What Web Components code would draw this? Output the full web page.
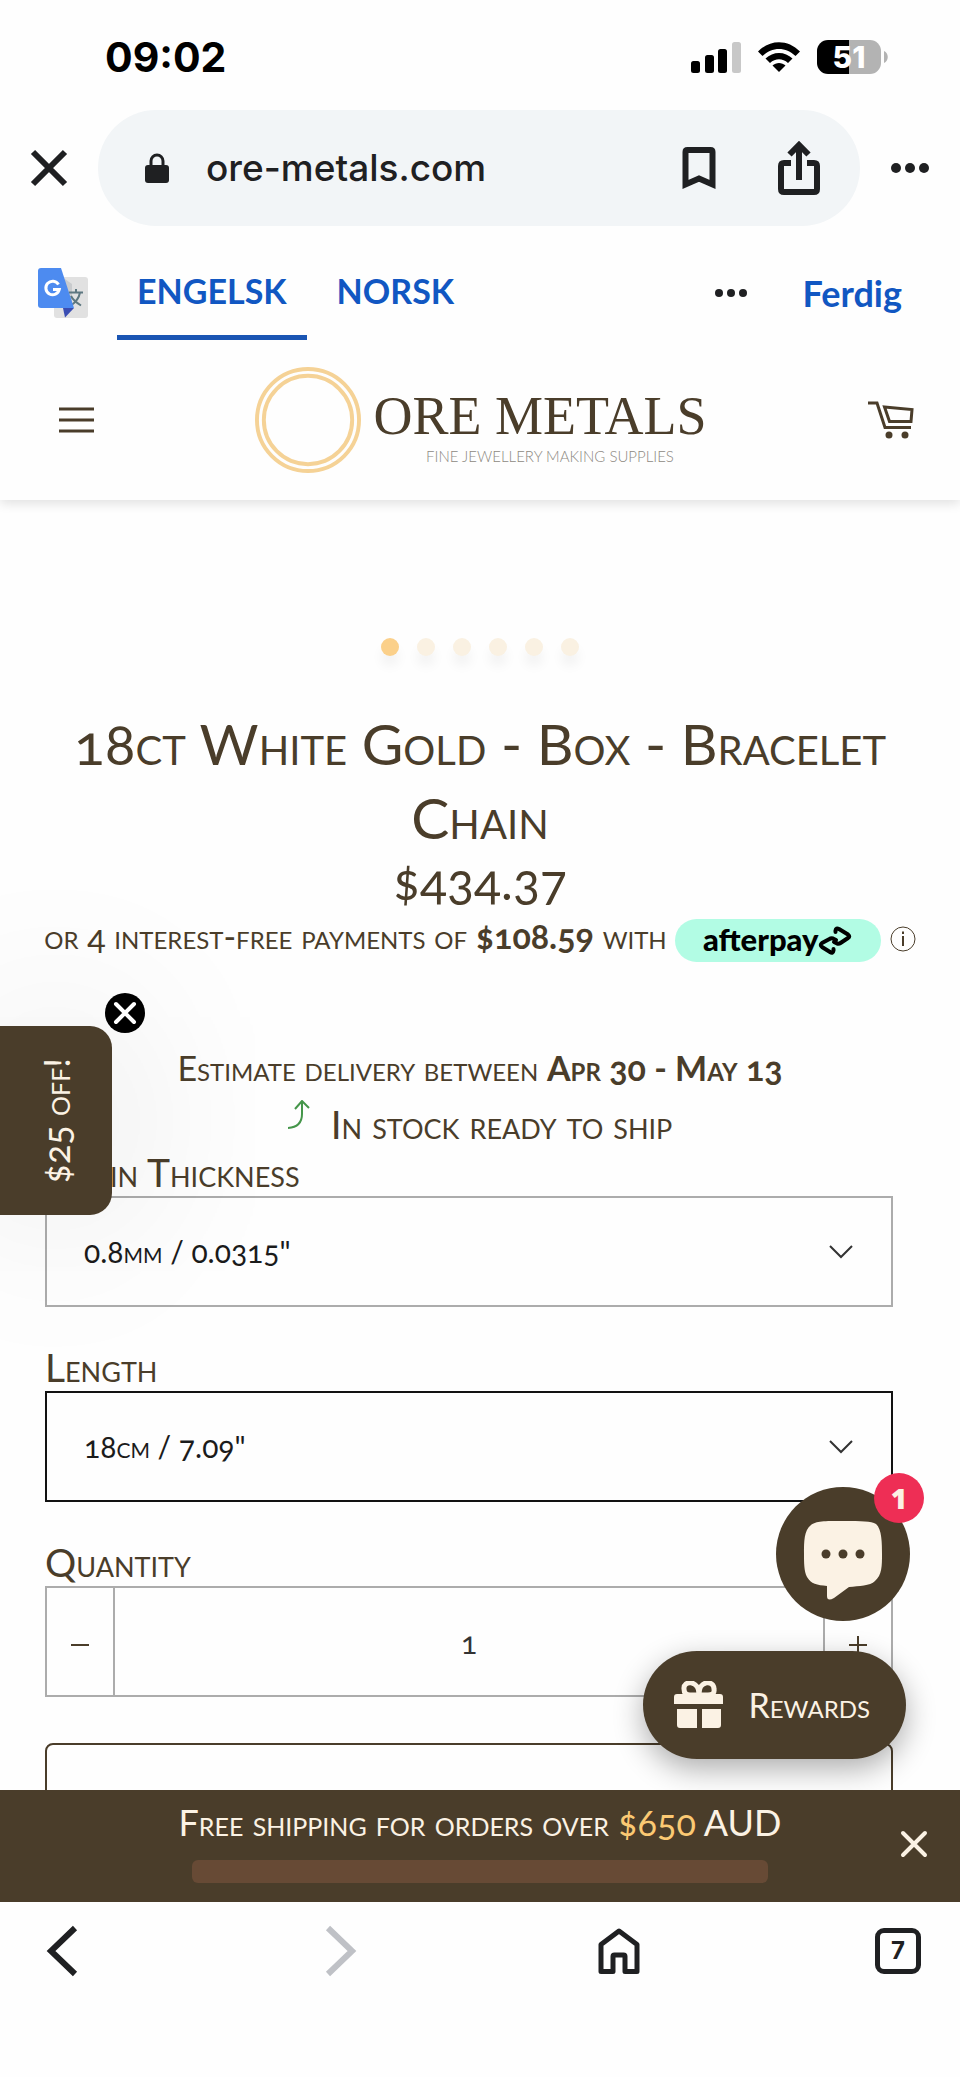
<!DOCTYPE html>
<html lang="en">
<head>
<meta charset="utf-8">
<meta name="viewport" content="width=device-width, initial-scale=1">
<title>18ct White Gold - Box - Bracelet Chain</title>
<style>
  body {
    margin: 0;
    background: #fefefe;
  }
</style>
</head>
<body>
<shop-app></shop-app>

<script>
const base = `
  *, *::before, *::after { box-sizing: border-box; }
  :host { display: block; }
  svg { display: block; flex: none; }
  button {
    margin: 0;
    padding: 0;
    border: 0;
    background: none;
    color: inherit;
    font: inherit;
    cursor: pointer;
  }
`;

function createTemplate(css, html) {
  const template = document.createElement('template');
  template.innerHTML = `<style>${base}${css}</style>${html}`;
  return template;
}

class ShopElement extends HTMLElement {
  constructor() {
    super();
    this._shadowRoot = this.attachShadow({ mode: 'open' });
    this._shadowRoot.appendChild(this.constructor.template.content.cloneNode(true));
  }
}

class PhoneStatus extends ShopElement {
  static template = createTemplate(`
    :host {
      display: flex;
      align-items: center;
      justify-content: space-between;
      height: 110px;
      padding: 4px 72px 0 105px;
      color: #000;
      font: 700 41px/48px Inter, sans-serif;
    }
    .icons { display: flex; align-items: center; gap: 16px; }
    .battery { display: flex; align-items: center; gap: 3px; }
    .level {
      width: 64px;
      height: 34px;
      border-radius: 11px;
      background: linear-gradient(90deg, #000 50%, #b3b3b3 50%);
      color: #fff;
      font: 800 30px/34px Inter, sans-serif;
      text-align: center;
    }
  `, `
    <time>09:02</time>
    <div class="icons">
      <svg width="50" height="32" viewBox="0 0 50 32" aria-hidden="true">
        <rect x="0" y="20" width="9" height="12" rx="2.500"/>
        <rect x="14" y="14" width="9" height="18" rx="2.500"/>
        <rect x="27" y="8" width="9" height="24" rx="2.500"/>
        <rect x="41" y="1" width="9" height="31" rx="2.500" fill="#c8c8c8"/>
      </svg>
      <svg width="44" height="32" viewBox="0 0 44 32" aria-hidden="true">
        <path d="M1 10.500C13-2 31-2 43 10.500L38.500 15C29 5.500 15 5.500 5.500 15Z"/>
        <path d="M8.500 17.500C16 10 28 10 35.500 17.500L31 22C25.500 17 18.500 17 13 22Z"/>
        <path d="M15.500 24.500C19 21 25 21 28.500 24.500L22 31Z"/>
      </svg>
      <div class="battery">
        <div class="level">51</div>
        <svg width="4" height="12" viewBox="0 0 4 12" aria-hidden="true"><path d="M0 0C5 2 5 10 0 12Z" fill="#b3b3b3"/></svg>
      </div>
    </div>
  `);
}

class BrowserBar extends ShopElement {
  static template = createTemplate(`
    :host {
      display: flex;
      align-items: center;
      gap: 30px;
      padding: 0 30px;
      color: #1f2022;
    }
    .address {
      display: flex;
      flex: 1;
      align-items: center;
      height: 116px;
      padding: 0 40px 0 46px;
      border-radius: 58px;
      background: #f2f5f7;
    }
    .url {
      flex: 1;
      margin-left: 36px;
      font: 500 37px/48px Inter, sans-serif;
    }
    .share { margin-left: 62px; }
  `, `
    <button aria-label="Close">
      <svg width="38" height="38" viewBox="0 0 38 38" fill="none" stroke="currentColor" stroke-width="6"><path d="M3 3L35 35M35 3L3 35"/></svg>
    </button>
    <div class="address">
      <svg width="26" height="30" viewBox="0 0 26 30" aria-hidden="true">
        <path d="M7 14V8a6 6 0 0 1 12 0v6" fill="none" stroke="currentColor" stroke-width="3"/>
        <rect x="1" y="12" width="24" height="18" rx="3" fill="currentColor"/>
      </svg>
      <span class="url">ore-metals.com</span>
      <button aria-label="Bookmark">
        <svg width="34" height="44" viewBox="0 0 34 44" fill="none" stroke="currentColor" stroke-width="6"><path d="M3.500 38.500V6Q3.500 4 5.500 4H28.500Q30.500 4 30.500 6V38.500L17 32.500Z"/></svg>
      </button>
      <button class="share" aria-label="Share">
        <svg width="42" height="62" viewBox="0 0 42 62" fill="none" stroke="currentColor" stroke-width="6"><path d="M13 26H6Q3 26 3 29V52Q3 55 6 55H36Q39 55 39 52V29Q39 26 36 26H29M21 43V8M11.500 17.500L21 8L30.500 17.500"/></svg>
      </button>
    </div>
    <button aria-label="More">
      <svg width="40" height="12" viewBox="0 0 40 12" fill="currentColor"><circle cx="6" cy="6" r="5"/><circle cx="20" cy="6" r="5"/><circle cx="34" cy="6" r="5"/></svg>
    </button>
  `);
}

class TranslateBar extends ShopElement {
  static template = createTemplate(`
    :host {
      display: flex;
      align-items: stretch;
      height: 114px;
      padding: 20px 58px 0 38px;
      background: #fefefe;
      color: #1157c2;
      font: 700 34px/48px Lato, sans-serif;
    }
    .logo, .more, .done { align-self: center; }
    .tabs {
      display: flex;
      flex: 1;
      gap: 10px;
      margin-left: 29px;
    }
    .tabs button {
      padding: 0 20px;
      border-bottom: 5px solid transparent;
    }
    .tabs button[aria-selected="true"] { border-color: #1a55b3; }
    .more { margin-right: 55px; color: #1f2022; }
    .done { font-size: 36px; }
  `, `
    <svg class="logo" width="50" height="50" viewBox="0 0 50 50" role="img" aria-label="Translate">
      <rect x="16" y="9" width="34" height="41" rx="3" fill="#e1e1e1"/>
      <path d="M24 9L34 41V16Z" fill="#c9cbcd"/>
      <path d="M31 24.500H45M38 21V24.500M33 37.500C38 34 41 30 42 24.500M33 28C35 32 39 35 43 37.500" fill="none" stroke="#5d7780" stroke-width="2"/>
      <path d="M25 40H36L27 49.500Z" fill="#3a4db3"/>
      <path d="M3 0H23L36 40H3Q0 40 0 37V3Q0 0 3 0Z" fill="#4d8bf0"/>
      <path d="M20.500 16.500A6.800 6.800 0 1 0 21.300 21.500H15" fill="none" stroke="#fff" stroke-width="3"/>
    </svg>
    <div class="tabs" role="tablist">
      <button role="tab" aria-selected="true">ENGELSK</button>
      <button role="tab" aria-selected="false">NORSK</button>
    </div>
    <button class="more" aria-label="More languages">
      <svg width="32" height="10" viewBox="0 0 32 10" fill="currentColor"><circle cx="4" cy="5" r="4"/><circle cx="16" cy="5" r="4"/><circle cx="28" cy="5" r="4"/></svg>
    </button>
    <button class="done">Ferdig</button>
  `);
}

class ShopHeader extends ShopElement {
  static template = createTemplate(`
    :host {
      display: flex;
      align-items: center;
      justify-content: space-between;
      height: 160px;
      padding: 0 46px 0 59px;
      box-shadow: 0 4px 10px rgba(0, 0, 0, .11);
      color: #4a3d2a;
    }
    a {
      display: flex;
      align-items: center;
      gap: 12px;
      color: inherit;
      text-decoration: none;
    }
    .words { display: flex; flex-direction: column; padding-top: 10px; }
    .name { font: 400 54px/62px "Liberation Serif", serif; }
    .tagline {
      align-self: center;
      padding-left: 20px;
      color: #8d8982;
      font: 300 15px/18px Lato, sans-serif;
    }
  `, `
    <button aria-label="Menu">
      <svg width="35" height="26" viewBox="0 0 35 26" stroke="currentColor" stroke-width="3"><path d="M0 2H35M0 13H35M0 24H35"/></svg>
    </button>
    <a href="#">
      <svg width="106" height="106" viewBox="0 0 108 108" fill="none" stroke="#f5d296" stroke-width="4" aria-hidden="true">
        <circle cx="54" cy="54" r="52"/><circle cx="54" cy="54" r="45"/>
      </svg>
      <span class="words">
        <span class="name">ORE METALS</span>
        <span class="tagline">FINE JEWELLERY MAKING SUPPLIES</span>
      </span>
    </a>
    <button aria-label="Cart">
      <svg width="46" height="38" viewBox="0 0 46 38" fill="none" stroke="currentColor" stroke-width="3">
        <path d="M0 2H9L17 26.500H43M16.500 6L44 8.500L43 20.500H21.500Z"/>
        <circle cx="21" cy="34" r="3.500" fill="currentColor" stroke="none"/>
        <circle cx="37" cy="34" r="3.500" fill="currentColor" stroke="none"/>
      </svg>
    </button>
  `);
}

class OptionSelect extends ShopElement {
  static template = createTemplate(`
    label { display: block; font-size: 39px; line-height: 48px; }
    .box { display: grid; align-items: center; }
    .box > * { grid-area: 1 / 1; }
    select {
      width: 100%;
      height: 111px;
      padding: 0 80px 2px 37px;
      appearance: none;
      border: 2px solid #acacac;
      border-radius: 0;
      background: none;
      color: #1b1b1b;
      font: inherit;
      font-size: 30px;
    }
    :host([active]) select { border-color: #121212; }
    svg { justify-self: end; margin-right: 40px; pointer-events: none; }
  `, `
    <label for="option"></label>
    <div class="box">
      <select id="option"></select>
      <svg width="24" height="14" viewBox="0 0 24 14" fill="none" stroke="#333" stroke-width="2"><path d="M1 1L12 12L23 1"/></svg>
    </div>
  `);

  connectedCallback() {
    this._shadowRoot.querySelector('label').textContent = this.getAttribute('label');
    this._shadowRoot.querySelector('select').add(new Option(this.getAttribute('value')));
  }
}

class QuantityPicker extends ShopElement {
  static template = createTemplate(`
    label { display: block; font-size: 39px; line-height: 48px; }
    .box { display: flex; height: 111px; border: 2px solid #acacac; }
    button { display: grid; place-items: center; width: 66px; padding-top: 6px; }
    input {
      flex: 1;
      min-width: 0;
      border: solid #acacac;
      border-width: 0 2px;
      border-radius: 0;
      background: none;
      color: #333;
      font: inherit;
      font-size: 30px;
      text-align: center;
    }
  `, `
    <label for="quantity">Quantity</label>
    <div class="box">
      <button class="minus" aria-label="Decrease">
        <svg width="18" height="18" viewBox="0 0 18 18" stroke="currentColor" stroke-width="2"><path d="M0 9H18"/></svg>
      </button>
      <input id="quantity" type="text" inputmode="numeric" value="1">
      <button class="plus" aria-label="Increase">
        <svg width="18" height="18" viewBox="0 0 18 18" stroke="currentColor" stroke-width="2"><path d="M0 9H18M9 0V18"/></svg>
      </button>
    </div>
  `);

  constructor() {
    super();
    this.$input = this._shadowRoot.querySelector('input');
    this._shadowRoot.querySelector('.minus').addEventListener('click', () => this._step(-1));
    this._shadowRoot.querySelector('.plus').addEventListener('click', () => this._step(1));
  }

  _step(amount) {
    this.$input.value = Math.max(1, Number(this.$input.value) + amount);
  }
}

class AfterpayLine extends ShopElement {
  static template = createTemplate(`
    :host {
      display: flex;
      align-items: flex-start;
      justify-content: center;
      font-size: 34px;
      line-height: 34px;
      white-space: nowrap;
    }
    .pill {
      display: flex;
      align-items: center;
      justify-content: center;
      width: 206px;
      height: 43px;
      margin: 0 9px 0 8px;
      border-radius: 22px;
      background: #b2fce4;
      color: #000;
      font: 900 31px/34px Lato, sans-serif;
      font-variant: normal;
    }
    .pill span { padding-bottom: 4px; }
    button { align-self: center; padding-bottom: 4px; }
  `, `
    <span>or 4 interest-free payments of <b>$108.59</b> with</span>
    <span class="pill"><span>afterpay</span>
      <svg width="34" height="30" viewBox="0 0 34 30" fill="none" stroke="#000" stroke-width="4" stroke-linecap="round" stroke-linejoin="round" aria-hidden="true">
        <path d="M18 14L15 12.500Q13 12 11.500 13L4 17Q1.500 19 4 21L12 26Q15 28 15.500 24.500V23M16 16L19 17.500Q21 18 22.500 17L30 12Q32.500 10.500 30 8.500L21 3Q18 1.500 17.500 4.500V6"/>
      </svg>
    </span>
    <button aria-label="Afterpay information">
      <svg width="26" height="26" viewBox="0 0 26 26" fill="none" stroke="currentColor"><circle cx="13" cy="13" r="12"/><path d="M13 10V20M13 5.500V8" stroke-width="2"/></svg>
    </button>
  `);
}

class ProductPage extends ShopElement {
  static template = createTemplate(`
    :host {
      padding-top: 138px;
      color: #4a3d2a;
      font-family: Lato, sans-serif;
      font-variant: small-caps oldstyle-nums;
      text-align: center;
    }
    .dots { display: flex; justify-content: center; gap: 18px; }
    .dots i {
      width: 18px;
      height: 18px;
      border-radius: 50%;
      background: #faf1e2;
      box-shadow: 0 10px 12px rgba(0, 0, 0, .05);
    }
    .dots i:first-child { background: #fbd08a; }
    h1 {
      margin: 50px 60px 0;
      font-size: 57px;
      font-weight: 400;
      line-height: 74px;
    }
    .price { margin: 0 0 11px; font-size: 50px; line-height: 54px; }
    .delivery { margin: 86px 0 0; font-size: 34px; line-height: 40px; }
    .stock {
      display: flex;
      justify-content: center;
      gap: 21px;
      margin: 0;
      padding-top: 12px;
      font-size: 39px;
      line-height: 48px;
    }
    form {
      display: flex;
      flex-direction: column;
      gap: 36px;
      margin: 0 67px 0 45px;
      text-align: left;
    }
    .add {
      height: 111px;
      margin-top: 10px;
      border: 2px solid #4a3d2a;
      border-radius: 8px;
    }
  `, `
    <div class="dots"><i></i><i></i><i></i><i></i><i></i><i></i></div>
    <h1>18ct White Gold - Box - Bracelet Chain</h1>
    <p class="price">$434.37</p>
    <afterpay-line></afterpay-line>
    <p class="delivery">Estimate delivery between <b>Apr 30 - May 13</b></p>
    <p class="stock">
      <svg width="22" height="30" viewBox="0 0 22 30" fill="none" stroke="#45964a" stroke-width="2" aria-hidden="true"><path d="M0 28Q14 27 14 14V2M7 9L14 1L21 8"/></svg>
      In stock ready to ship
    </p>
    <form>
      <option-select label="Chain Thickness" value='0.8mm / 0.0315"'></option-select>
      <option-select label="Length" value='18cm / 7.09"' active></option-select>
      <quantity-picker></quantity-picker>
      <button class="add" type="button" aria-label="Add to cart"></button>
    </form>
  `);
}

class OfferTab extends ShopElement {
  static template = createTemplate(`
    :host { width: 145px; }
    .dismiss { display: block; margin: 0 0 -7px auto; position: relative; }
    .tab {
      display: flex;
      align-items: center;
      justify-content: center;
      width: 112px;
      height: 189px;
      border-radius: 0 22px 22px 0;
      background: #4a3d2a;
      box-shadow: 0 0 190px rgba(0, 0, 0, .12);
      color: #fbf2e4;
      font: 400 36px/40px Lato, sans-serif;
      font-variant: small-caps oldstyle-nums;
    }
    .tab span { writing-mode: vertical-rl; transform: rotate(180deg); }
  `, `
    <button class="dismiss" aria-label="Dismiss offer">
      <svg width="40" height="40" viewBox="0 0 40 40"><circle cx="20" cy="20" r="20"/><path d="M11 11L29 29M29 11L11 29" stroke="#fff" stroke-width="4" stroke-linecap="round"/></svg>
    </button>
    <button class="tab"><span>$25 off!</span></button>
  `);
}

class ChatLauncher extends ShopElement {
  static template = createTemplate(`
    :host { position: relative; }
    button {
      display: grid;
      place-items: center;
      width: 134px;
      height: 134px;
      padding-top: 12px;
      border-radius: 50%;
      background: #4a3d2a;
    }
    .badge {
      position: absolute;
      top: -14px;
      right: -14px;
      width: 50px;
      height: 50px;
      border-radius: 50%;
      background: #ee2e55;
      color: #fbf2e4;
      font: 800 28px/50px "Open Sans", sans-serif;
      text-align: center;
    }
  `, `
    <button aria-label="Chat">
      <svg width="80" height="80" viewBox="0 0 80 80" aria-hidden="true">
        <path d="M40 1C59 1 68 1 73 4C79 9 79 24 79 34C79 46 79 55 72 61C67 66 56 66 46 67L31 78Q24 82 24 76V66C14 65 8 64 4 57C1 51 1 43 1 33C1 22 1 10 8 5C13 1 21 1 40 1Z" fill="#fbf2e4"/>
        <g fill="#4a3d2a"><circle cx="23" cy="34" r="4.500"/><circle cx="40" cy="34" r="4.500"/><circle cx="57" cy="34" r="4.500"/></g>
      </svg>
    </button>
    <span class="badge">1</span>
  `);
}

class RewardsButton extends ShopElement {
  static template = createTemplate(`
    button {
      display: flex;
      align-items: center;
      gap: 24px;
      height: 108px;
      padding: 0 36px 0 31px;
      border-radius: 54px;
      background: #4a3d2a;
      box-shadow: 0 10px 30px rgba(0, 0, 0, .32);
      color: #fbf2e4;
      font: 400 34px/40px Lato, sans-serif;
      font-variant: small-caps;
    }
  `, `
    <button>
      <svg width="50" height="48" viewBox="0 0 50 48" fill="#fbf2e4" aria-hidden="true">
        <path d="M0 23V16Q0 13 3 13H46Q49 13 49 16V23ZM3 28H23V47H6Q3 47 3 44ZM28 28H47V44Q47 47 44 47H28Z"/>
        <path d="M25 13C25-1 9-1 10 8Q10 14 16 14H34Q41 14 40 8C40-1 25-1 25 13Z" fill="none" stroke="#fbf2e4" stroke-width="5"/>
      </svg>
      <slot></slot>
    </button>
  `);
}

class ShippingBar extends ShopElement {
  static template = createTemplate(`
    :host {
      display: grid;
      grid-template-columns: 92px 1fr 92px;
      align-items: center;
      height: 112px;
      padding-bottom: 4px;
      background: #4a3d2a;
      color: #fbf2e4;
      font: 400 36px/32px Lato, sans-serif;
      font-variant: small-caps oldstyle-nums;
      text-align: center;
    }
    .message { grid-column: 2; }
    p { margin: 0 0 22px; white-space: nowrap; }
    b { color: #fbc973; font-weight: 400; }
    .track { height: 23px; margin: 0 100px; border-radius: 6px; background: #674a35; }
    button { justify-self: center; }
  `, `
    <div class="message">
      <p>Free shipping for orders over <b>$650</b> AUD</p>
      <div class="track" role="progressbar" aria-label="Free shipping progress" aria-valuenow="0"></div>
    </div>
    <button aria-label="Close">
      <svg width="28" height="28" viewBox="0 0 28 28" stroke="currentColor" stroke-width="4" stroke-linecap="round"><path d="M3 3L25 25M25 3L3 25"/></svg>
    </button>
  `);
}

class BrowserNav extends ShopElement {
  static template = createTemplate(`
    :host {
      display: flex;
      justify-content: space-between;
      align-items: center;
      height: 175px;
      padding: 0 39px 77px;
      color: #1f2022;
    }
    button { display: grid; place-items: center; width: 46px; }
    .forward { color: #bfc1c6; }
    .tabs {
      height: 46px;
      border: 5px solid currentColor;
      border-radius: 9px;
      font: 700 24px/36px Inter, sans-serif;
    }
  `, `
    <button aria-label="Back">
      <svg width="32" height="52" viewBox="0 0 32 52" fill="none" stroke="currentColor" stroke-width="6"><path d="M29 3L5 26L29 49"/></svg>
    </button>
    <button class="forward" aria-label="Forward">
      <svg width="32" height="52" viewBox="0 0 32 52" fill="none" stroke="currentColor" stroke-width="6"><path d="M3 3L27 26L3 49"/></svg>
    </button>
    <button aria-label="Home">
      <svg width="42" height="48" viewBox="0 0 42 48" fill="none" stroke="currentColor" stroke-width="5" stroke-linejoin="round"><path d="M3 17.500L21 4L39 17.500V44.500H27V29.500Q27 28 25.500 28H16.500Q15 28 15 29.500V44.500H3Z"/></svg>
    </button>
    <button class="tabs" aria-label="7 open tabs">7</button>
  `);
}

class ShopApp extends ShopElement {
  static template = createTemplate(`
    :host {
      display: flex;
      flex-direction: column;
      height: 100vh;
      overflow: hidden;
    }
    /* the bar covers the upper edge of the header's shadow */
    shop-header { position: relative; z-index: 1; }
    translate-bar { position: relative; z-index: 2; }
    main { flex: 1; min-height: 0; position: relative; }
    .scroll { height: 100%; overflow-y: auto; scrollbar-width: none; }
    /* these float over the product while it scrolls */
    offer-tab { position: absolute; top: 493px; left: 0; }
    .floating {
      display: flex;
      position: absolute;
      right: 50px;
      bottom: 31px;
      flex-direction: column;
      align-items: flex-end;
      gap: 30px;
    }
    rewards-button { margin-right: 4px; }
    shipping-bar { position: relative; }
  `, `
    <phone-status></phone-status>
    <browser-bar></browser-bar>
    <translate-bar></translate-bar>
    <shop-header></shop-header>
    <main>
      <div class="scroll"><product-page></product-page></div>
      <offer-tab></offer-tab>
      <div class="floating">
        <chat-launcher></chat-launcher>
        <rewards-button>Rewards</rewards-button>
      </div>
    </main>
    <shipping-bar></shipping-bar>
    <browser-nav></browser-nav>
  `);
}

window.customElements.define('phone-status', PhoneStatus);
window.customElements.define('browser-bar', BrowserBar);
window.customElements.define('translate-bar', TranslateBar);
window.customElements.define('shop-header', ShopHeader);
window.customElements.define('option-select', OptionSelect);
window.customElements.define('quantity-picker', QuantityPicker);
window.customElements.define('afterpay-line', AfterpayLine);
window.customElements.define('product-page', ProductPage);
window.customElements.define('offer-tab', OfferTab);
window.customElements.define('chat-launcher', ChatLauncher);
window.customElements.define('rewards-button', RewardsButton);
window.customElements.define('shipping-bar', ShippingBar);
window.customElements.define('browser-nav', BrowserNav);
window.customElements.define('shop-app', ShopApp);
</script>
</body>
</html>
